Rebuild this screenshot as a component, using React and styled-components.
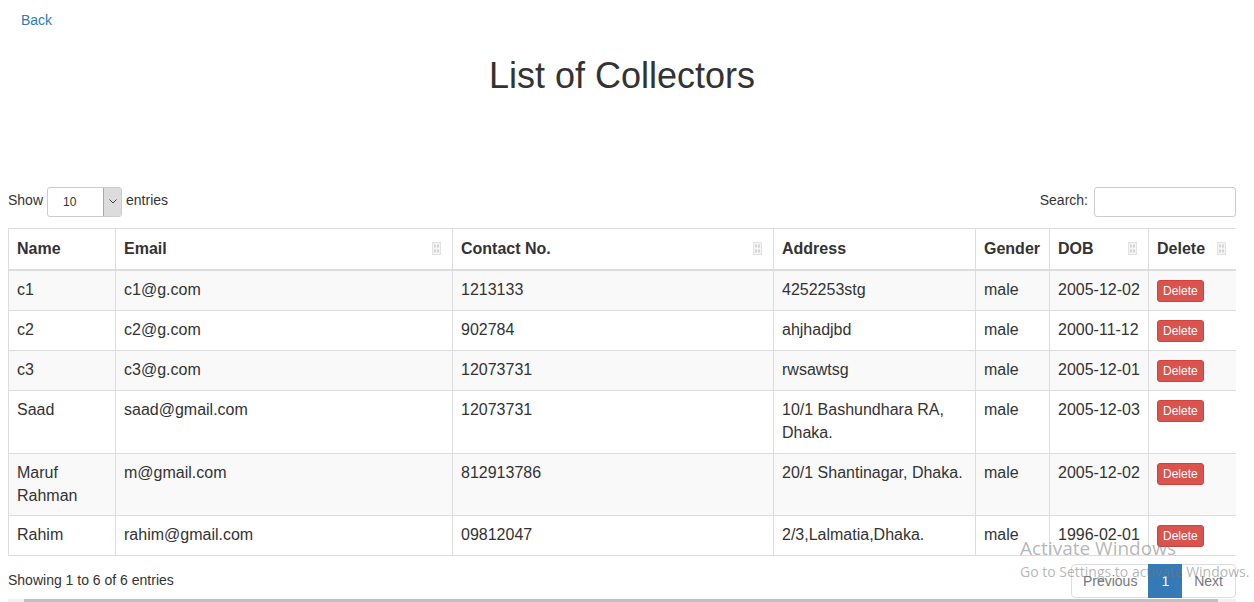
import React from 'react';
import styled, { createGlobalStyle } from 'styled-components';

const GlobalStyle = createGlobalStyle`
  body {
    margin: 0;
    font-family: "Liberation Sans", Arial, Helvetica, sans-serif;
    font-size: 14px;
    line-height: 1.42857;
    color: #333;
    background: #fff;
    overflow: hidden;
  }
`;

const collectors = [
  { name: 'c1', email: 'c1@g.com', contact: '1213133', address: '4252253stg', gender: 'male', dob: '2005-12-02' },
  { name: 'c2', email: 'c2@g.com', contact: '902784', address: 'ahjhadjbd', gender: 'male', dob: '2000-11-12' },
  { name: 'c3', email: 'c3@g.com', contact: '12073731', address: 'rwsawtsg', gender: 'male', dob: '2005-12-01' },
  { name: 'Saad', email: 'saad@gmail.com', contact: '12073731', address: '10/1 Bashundhara RA, Dhaka.', gender: 'male', dob: '2005-12-03' },
  { name: 'Maruf Rahman', email: 'm@gmail.com', contact: '812913786', address: '20/1 Shantinagar, Dhaka.', gender: 'male', dob: '2005-12-02' },
  { name: 'Rahim', email: 'rahim@gmail.com', contact: '09812047', address: '2/3,Lalmatia,Dhaka.', gender: 'male', dob: '1996-02-01' },
];

const columns = [
  { title: 'Name', width: 107, sort: false },
  { title: 'Email', width: 337, sort: true },
  { title: 'Contact No.', width: 321, sort: true },
  { title: 'Address', width: 202, sort: false },
  { title: 'Gender', width: 74, sort: false },
  { title: 'DOB', width: 99, sort: true },
  { title: 'Delete', width: 89, sort: true },
];

const SortIcon = () => (
  <svg width="9" height="13" viewBox="0 0 9 13">
    <rect x="0.5" y="0.5" width="8" height="12" fill="#f6f6f6" stroke="#e2e2e2" />
    <rect x="2" y="2.5" width="2" height="3" fill="#d4d4d4" />
    <rect x="5" y="2.5" width="2" height="3" fill="#d4d4d4" />
    <rect x="2" y="7.5" width="2" height="3" fill="#d4d4d4" />
    <rect x="5" y="7.5" width="2" height="3" fill="#d4d4d4" />
  </svg>
);

const App = () => {
  return (
    <Page>
      <GlobalStyle />
      <BackLink href="#">Back</BackLink>
      <Title>List of Collectors</Title>

      <Toolbar>
        <Label>
          Show
          <FakeSelect>
            <span>10</span>
            <Arrow>
              <svg width="8" height="5" viewBox="0 0 8 5">
                <path d="M0.5 0.5 L4 4 L7.5 0.5" fill="none" stroke="#444" strokeWidth="1" />
              </svg>
            </Arrow>
          </FakeSelect>
          entries
        </Label>
        <Label>
          Search:
          <SearchInput type="text" />
        </Label>
      </Toolbar>

      <TableBox>
        <Table>
          <colgroup>
            {columns.map(c => <col key={c.title} style={{ width: c.width }} />)}
          </colgroup>
          <thead>
            <tr>
              {columns.map(c => (
                <Th key={c.title}>
                  <HeadInner>
                    {c.title}
                    {c.sort && <SortIcon />}
                  </HeadInner>
                </Th>
              ))}
            </tr>
          </thead>
          <tbody>
            {collectors.map((row, i) => (
              <Row key={row.name} $striped={i % 2 === 0}>
                <Td>{row.name}</Td>
                <Td>{row.email}</Td>
                <Td>{row.contact}</Td>
                <Td>{row.address}</Td>
                <Td>{row.gender}</Td>
                <Td>{row.dob}</Td>
                <Td><DeleteButton>Delete</DeleteButton></Td>
              </Row>
            ))}
          </tbody>
        </Table>
      </TableBox>

      <Footer>
        <Info>Showing 1 to 6 of 6 entries</Info>
        <Pager>
          <PageItem $first>Previous</PageItem>
          <PageItem $active>1</PageItem>
          <PageItem $last>Next</PageItem>
        </Pager>
      </Footer>

      <ScrollTrack>
        <ScrollThumb />
      </ScrollTrack>

      <Watermark>
        <strong>Activate Windows</strong>
        <span>Go to Settings to activate Windows.</span>
      </Watermark>
    </Page>
  );
};

const Page = styled.div`
  position: relative;
  width: 1228px;
  padding: 10px 18px 0 8px;
`;

const BackLink = styled.a`
  display: block;
  width: max-content;
  margin-left: 13px;
  color: #337ab7;
  text-decoration: none;
  font-size: 14px;
  line-height: 20px;
`;

const Title = styled.h1`
  margin: 26px 0 91px;
  text-align: center;
  font-size: 36px;
  font-weight: 500;
  line-height: 1.1;
  color: #333;
`;

const Toolbar = styled.div`
  display: flex;
  justify-content: space-between;
  align-items: center;
  height: 30px;
`;

const Label = styled.label`
  display: flex;
  align-items: center;
  gap: 4px;
  font-size: 14px;
  margin-top: -1px;
`;

const FakeSelect = styled.div`
  display: flex;
  align-items: stretch;
  justify-content: space-between;
  box-sizing: border-box;
  width: 75px;
  height: 30px;
  margin-top: 1px;
  border: 1px solid #ccc;
  border-radius: 3px;
  font-size: 12px;
  span {
    padding-left: 15px;
    display: flex;
    align-items: center;
    padding-top: 2px;
  }
`;

const Arrow = styled.div`
  display: flex;
  align-items: center;
  justify-content: center;
  width: 17px;
  background: #dcdcdc;
  border-left: 1px solid #a9a9a9;
`;

const SearchInput = styled.input`
  box-sizing: border-box;
  width: 142px;
  height: 30px;
  margin-top: 1px;
  margin-left: 2px;
  border: 1px solid #ccc;
  border-radius: 3px;
  padding: 5px 10px;
  font-size: 12px;
  outline: none;
`;

const TableBox = styled.div`
  margin-top: 11px;
  width: 1228px;
  overflow: hidden;
`;

const Table = styled.table`
  width: 1229px;
  table-layout: fixed;
  border-collapse: collapse;
  font-size: 16px;
  line-height: 22.75px;
`;

const Th = styled.th`
  padding: 9px 8px 9px;
  text-align: left;
  font-weight: bold;
  border: 1px solid #ddd;
  border-bottom: 2px solid #ddd;
  vertical-align: bottom;
`;

const HeadInner = styled.div`
  display: flex;
  justify-content: space-between;
  align-items: center;
  svg {
    margin-right: 3px;
  }
`;

const Row = styled.tr`
  background: ${p => (p.$striped ? '#f9f9f9' : '#fff')};
`;

const Td = styled.td`
  padding: 8px;
  border: 1px solid #ddd;
  vertical-align: top;
`;

const DeleteButton = styled.button`
  display: block;
  margin-top: 1px;
  padding: 1px 5px;
  font-family: inherit;
  font-size: 12px;
  line-height: 1.5;
  color: #fff;
  background: #d9534f;
  border: 1px solid #d43f3a;
  border-radius: 3px;
`;

const Footer = styled.div`
  display: flex;
  justify-content: space-between;
  align-items: center;
  margin-top: 8px;
`;

const Info = styled.div`
  font-size: 14px;
  margin-top: -1px;
`;

const Pager = styled.div`
  display: flex;
`;

const PageItem = styled.span`
  padding: 6px ${p => (p.$first ? '11px' : '12px')};
  font-size: 14px;
  line-height: 20px;
  border: 1px solid ${p => (p.$active ? '#337ab7' : '#ddd')};
  margin-left: ${p => (p.$first ? '0' : '-1px')};
  background: ${p => (p.$active ? '#337ab7' : '#fff')};
  color: ${p => (p.$active ? '#fff' : '#777')};
  border-radius: ${p => (p.$first ? '4px 0 0 4px' : p.$last ? '0 4px 4px 0' : '0')};
  position: ${p => (p.$active ? 'relative' : 'static')};
`;

const ScrollTrack = styled.div`
  margin-top: 1px;
  height: 15px;
  background: #f1f1f1;
  padding-left: 16px;
  padding-right: 18px;
`;

const ScrollThumb = styled.div`
  height: 100%;
  background: #c1c1c1;
`;

const Watermark = styled.div`
  position: absolute;
  left: 1020px;
  top: 536px;
  display: flex;
  flex-direction: column;
  gap: 2px;
  white-space: nowrap;
  pointer-events: none;
  font-family: "Open Sans", "Liberation Sans", sans-serif;
  color: rgba(120, 120, 120, 0.55);
  strong {
    font-weight: 400;
    font-size: 19px;
    line-height: 25px;
  }
  span {
    font-size: 14px;
    line-height: 18px;
  }
`;

export default App;
